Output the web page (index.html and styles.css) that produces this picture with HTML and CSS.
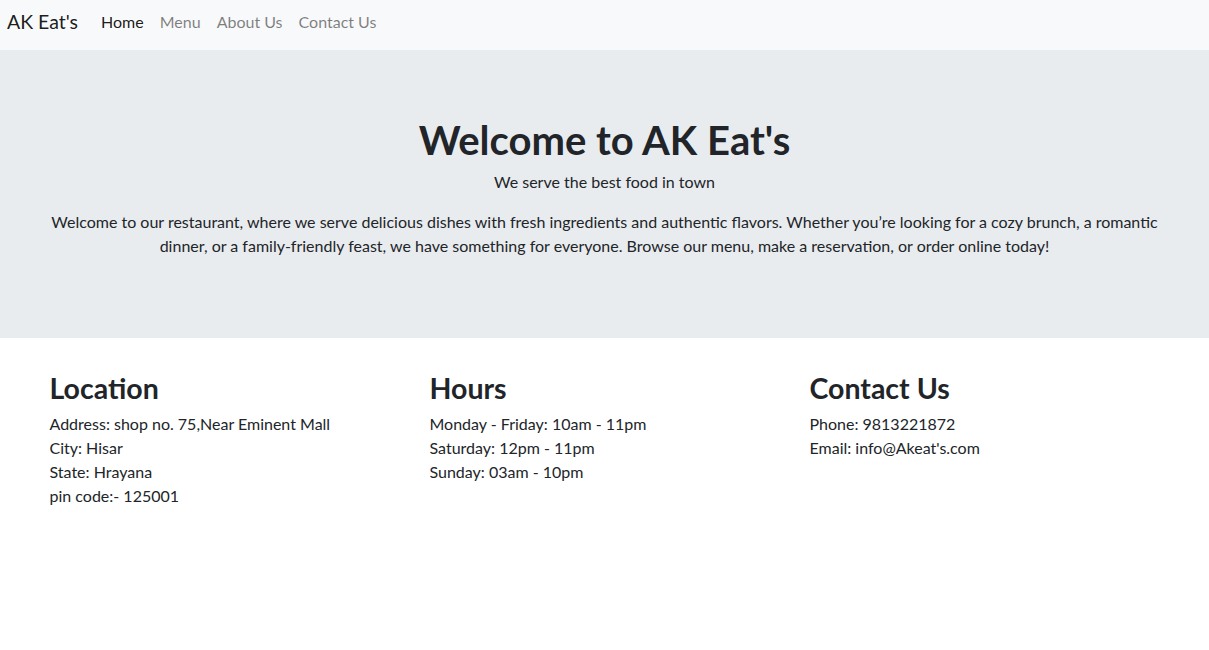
FILE: index.html
```html
<!DOCTYPE html>
<html lang="en">
<head>
<meta charset="utf-8">
<title>AK Eat's</title>
<link rel="stylesheet" href="styles.css">
</head>
<body>
<nav class="navbar">
  <a class="brand" href="#">AK Eat's</a>
  <ul class="nav-links">
    <li><a class="nav-link active" href="#">Home</a></li>
    <li><a class="nav-link" href="#">Menu</a></li>
    <li><a class="nav-link" href="#">About Us</a></li>
    <li><a class="nav-link" href="#">Contact Us</a></li>
  </ul>
</nav>
<header class="jumbotron">
  <h1 class="hero-title">Welcome to AK Eat's</h1>
  <p class="hero-sub">We serve the best food in town</p>
  <p class="hero-text">Welcome to our restaurant, where we serve delicious dishes with fresh ingredients and authentic flavors. Whether you’re looking for a cozy brunch, a romantic dinner, or a family-friendly feast, we have something for everyone. Browse our menu, make a reservation, or order online today!</p>
</header>
<main class="info">
  <section class="info-col">
    <h2 class="info-title">Location</h2>
    <p class="info-text">Address: shop no. 75,Near Eminent Mall<br>City: Hisar<br>State: Hrayana<br>pin code:- 125001</p>
  </section>
  <section class="info-col">
    <h2 class="info-title">Hours</h2>
    <p class="info-text">Monday - Friday: 10am - 11pm<br>Saturday: 12pm - 11pm<br>Sunday: 03am - 10pm</p>
  </section>
  <section class="info-col">
    <h2 class="info-title">Contact Us</h2>
    <p class="info-text">Phone: 9813221872<br>Email: info@Akeat's.com</p>
  </section>
</main>
</body>
</html>
```
FILE: styles.css
```css
* { box-sizing: border-box; }
body {
  margin: 0;
  font-family: Lato, "Liberation Sans", sans-serif;
  font-size: 16px;
  line-height: 1.5;
  color: #212529;
  background: #fff;
}
.navbar {
  display: flex;
  align-items: center;
  height: 50px;
  padding: 0 7px 6px;
  background: #f8f9fa;
}
.brand {
  font-size: 19.5px;
  line-height: 30px;
  color: rgba(0,0,0,.9);
  text-decoration: none;
  margin-right: 15px;
}
.nav-links {
  display: flex;
  list-style: none;
  margin: 0;
  padding: 0;
}
.nav-link {
  display: block;
  padding: 8px;
  color: rgba(0,0,0,.5);
  text-decoration: none;
}
.nav-link.active { color: rgba(0,0,0,.9); }
.jumbotron {
  background: #e9ecef;
  padding: 66px 32px 64px;
  text-align: center;
  margin-bottom: 31px;
}
.hero-title {
  margin: 0 0 6px;
  font-size: 40px;
  font-weight: 700;
  line-height: 48px;
}
.hero-sub { margin: 0 0 16px; }
.hero-text { margin: 0 auto 16px; max-width: 1130px; }
.info {
  display: grid;
  grid-template-columns: repeat(3, 380px);
  justify-content: center;
}
.info-col { padding: 0 15px; }
.info-title {
  margin: 0 0 5px;
  font-size: 28.5px;
  font-weight: 700;
  line-height: 38px;
}
.info-text { margin: 0; }
```
